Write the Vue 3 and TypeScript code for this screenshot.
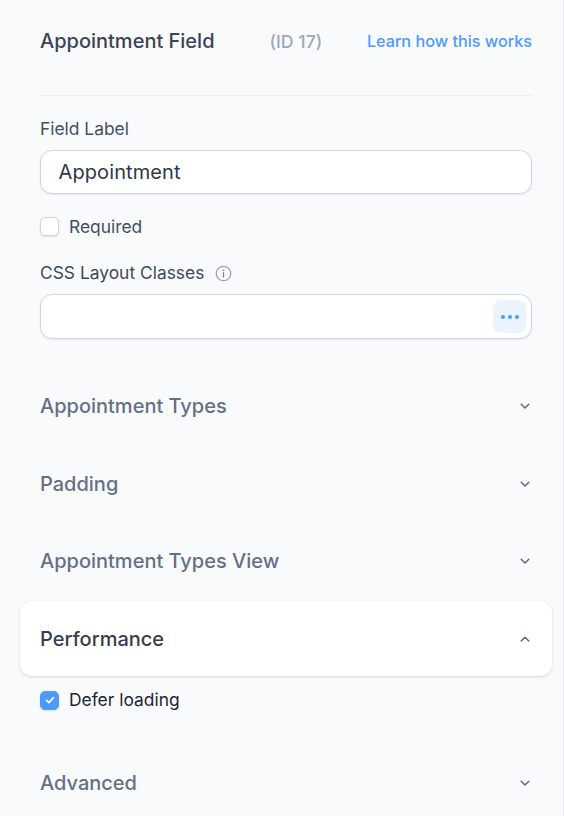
<script setup lang="ts">
const closedBefore: string[] = ['Appointment Types', 'Padding', 'Appointment Types View']
</script>

<template>
  <div class="panel">
    <header class="head">
      <h1 class="title">Appointment Field</h1>
      <span class="id">(ID 17)</span>
      <a class="learn">Learn how this works</a>
    </header>
    <hr class="rule" />

    <label class="label first">Field Label</label>
    <div class="input">Appointment</div>

    <div class="check required">
      <span class="box"></span>
      <span>Required</span>
    </div>

    <div class="label css">
      <span>CSS Layout Classes</span>
      <svg class="info" width="17" height="17" viewBox="0 0 16 16" fill="none">
        <circle cx="8" cy="8" r="6.8" stroke="#98a2b3" stroke-width="1.2" />
        <path d="M8 7.3v4" stroke="#7b859b" stroke-width="1.3" stroke-linecap="round" />
        <circle cx="8" cy="5" r=".85" fill="#7b859b" />
      </svg>
    </div>
    <div class="input tall">
      <button class="more" type="button">
        <i></i><i></i><i></i>
      </button>
    </div>

    <section class="sections">
      <div v-for="name in closedBefore" :key="name" class="sec">
        <span>{{ name }}</span>
        <svg class="chev" width="12" height="12" viewBox="0 0 12 12" fill="none">
          <path d="M2.2 4.2 6 8l3.8-3.8" stroke="#5f6b80" stroke-width="1.5" stroke-linecap="round" stroke-linejoin="round" />
        </svg>
      </div>

      <div class="sec open">
        <span>Performance</span>
        <svg class="chev" width="12" height="12" viewBox="0 0 12 12" fill="none">
          <path d="M2.2 8 6 4.2 9.8 8" stroke="#5f6b80" stroke-width="1.5" stroke-linecap="round" stroke-linejoin="round" />
        </svg>
      </div>
      <div class="check defer">
        <span class="box on">
          <svg width="12" height="12" viewBox="0 0 12 12" fill="none">
            <path d="M2.6 6.3 5 8.6l4.4-5" stroke="#fff" stroke-width="1.7" stroke-linecap="round" stroke-linejoin="round" />
          </svg>
        </span>
        <span>Defer loading</span>
      </div>

      <div class="sec last">
        <span>Advanced</span>
        <svg class="chev" width="12" height="12" viewBox="0 0 12 12" fill="none">
          <path d="M2.2 4.2 6 8l3.8-3.8" stroke="#5f6b80" stroke-width="1.5" stroke-linecap="round" stroke-linejoin="round" />
        </svg>
      </div>
    </section>
  </div>
</template>

<style>
html, body { margin: 0; background: #f9fafc; }
</style>

<style scoped>
.panel {
  box-sizing: border-box;
  width: 564px;
  height: 816px;
  overflow: hidden;
  padding: 0 31px 0 40px;
  background: #f9fafc;
  border-right: 1px solid #e6e8ee;
  font-family: Inter, "Noto Sans", sans-serif;
  color: #353e4f;
}
.head {
  display: flex;
  align-items: center;
  height: 82px;
}
.title {
  margin: 0;
  font-size: 20px;
  line-height: 28px;
  font-weight: 500;
  color: #3b4454;
}
.id {
  margin-left: 55px;
  font-size: 17.7px;
  font-weight: 500;
  color: #a1a8b7;
}
.learn {
  margin-left: auto;
  font-size: 16.2px;
  font-weight: 500;
  color: #4b9bff;
}
.rule {
  margin: 13px 0 0;
  border: 0;
  height: 1px;
  background: #eceef2;
}
.label {
  display: flex;
  align-items: center;
  font-size: 17.4px;
  line-height: 24px;
  color: #445064;
}
.first { margin-top: 21px; }
.css { margin-top: 22px; gap: 11px; color: #3f4a5e; }
.info { display: block; }
.input {
  box-sizing: border-box;
  display: flex;
  align-items: center;
  height: 44px;
  margin-top: 9px;
  padding: 0 17.5px;
  background: #fff;
  border: 1px solid #d0d5de;
  border-radius: 12px;
  box-shadow: 0 1px 2px rgba(16, 24, 40, .08);
  font-size: 20px;
  letter-spacing: .1px;
  color: #2f3847;
}
.tall {
  height: 45px;
  margin-top: 9px;
  padding: 0 5px 0 17px;
  justify-content: flex-end;
}
.more {
  display: flex;
  align-items: center;
  justify-content: center;
  gap: 3px;
  width: 33px;
  height: 33px;
  padding: 0;
  border: 0;
  border-radius: 8px;
  background: #ebf3ff;
}
.more i {
  width: 4px;
  height: 4px;
  border-radius: 50%;
  background: #4b9bff;
}
.check {
  display: flex;
  align-items: center;
  gap: 10px;
  font-size: 17.4px;
  line-height: 24px;
}
.required { margin-top: 21px; color: #445064; }
.defer { margin-top: 12px; color: #1f2636; }
.box {
  box-sizing: border-box;
  display: flex;
  align-items: center;
  justify-content: center;
  width: 19px;
  height: 19px;
  background: #fff;
  border: 1px solid #d0d5de;
  border-radius: 5px;
  box-shadow: 0 1px 2px rgba(16, 24, 40, .12);
}
.required .box { margin-top: -1px; }
.box.on { background: #4b9bff; border-color: #4b9bff; }
.sections { margin-top: 28.5px; }
.sec {
  display: flex;
  align-items: center;
  justify-content: space-between;
  height: 77.5px;
  font-size: 20px;
  font-weight: 500;
  color: #667085;
}
.sec .chev { margin-right: 1.5px; }
.open {
  box-sizing: border-box;
  height: 75px;
  margin: 1px -20px 0 -20px;
  padding: 0 21.5px 0 20px;
  background: #fff;
  border-radius: 12px;
  box-shadow: 0 1px 3px rgba(16, 24, 40, .16);
  color: #353e4f;
}
.open .chev { margin-right: 0; }
.last { margin-top: 32.5px; }
</style>
